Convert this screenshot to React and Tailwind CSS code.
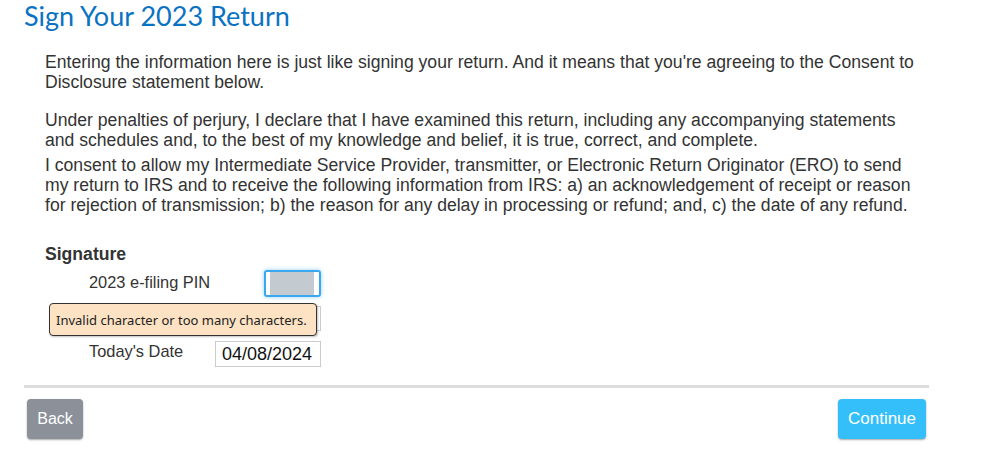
export default function App() {
  return (
    <div className="w-[999px] h-[452px] bg-white overflow-hidden font-['Liberation_Sans',Arial,sans-serif] text-[#333]">
      <div className="w-[905px] ml-[24px]">
        <h1 className="font-['Lato',sans-serif] text-[27px] leading-[32px] text-[#0a72c3]">
          Sign Your 2023 Return
        </h1>
        <div className="pl-[21px] pr-[10px] text-[17.6px] leading-[20px]">
          <p className="mt-[20px]">
            Entering the information here is just like signing your return. And it means that you're agreeing to the Consent to Disclosure statement below.
          </p>
          <p className="mt-[18px]">
            Under penalties of perjury, I declare that I have examined this return, including any accompanying statements and schedules and, to the best of my knowledge and belief, it is true, correct, and complete.
          </p>
          <p className="mt-[5px]">
            I consent to allow my Intermediate Service Provider, transmitter, or Electronic Return Originator (ERO) to send my return to IRS and to receive the following information from IRS: a) an acknowledgement of receipt or reason for rejection of transmission; b) the reason for any delay in processing or refund; and, c) the date of any refund.
          </p>

          <div className="mt-[29px] font-bold text-[#333]">Signature</div>
          <div className="w-[276px] text-[16.4px]">
            <div className="flex items-start justify-between h-[38px]">
              <span className="pl-[44px] mt-[8px] leading-[20px]">2023 e-filing PIN</span>
              <div className="w-[57px] h-[27px] mt-[6px] rounded-[3px] border-2 border-[#3aa7ee] shadow-[0_0_4px_#8fd0ff] bg-white flex items-center pl-[4px]">
                <div className="w-[44px] h-[23px] bg-[#c3cad0]" />
              </div>
            </div>
            <div className="relative flex justify-end items-start h-[36px]">
              <div className="w-[56px] h-[25px] mt-[4px] border border-[#ccc] bg-white" />
              <div className="absolute left-[4px] top-[1px] w-[268px] h-[33px] rounded-[4px] border border-[#333] bg-[#fde2c4] shadow-[1px_1px_2px_rgba(0,0,0,0.25)] flex items-center pl-[6px] font-['Noto_Sans',sans-serif] text-[13px] text-[#222]">
                Invalid character or too many characters.
              </div>
            </div>
            <div className="flex items-start justify-between">
              <span className="pl-[44px] mt-[3px] leading-[20px]">Today's Date</span>
              <div className="w-[106px] h-[26px] mt-[3px] border border-[#ccc] bg-white flex items-center pl-[6px] text-[18px] text-[#111]">
                04/08/2024
              </div>
            </div>
          </div>
        </div>
        <div className="mt-[18px] h-[3px] bg-[#ddd]" />
        <div className="flex justify-between items-start mt-[11px] pl-[3px] pr-[3px]">
          <button className="w-[56px] h-[40px] rounded-[4px] bg-[#8b9099] text-white text-[16px] shadow-[0_1px_2px_rgba(0,0,0,0.35)]">
            Back
          </button>
          <button className="w-[88px] h-[40px] rounded-[4px] bg-[#34bffb] text-white text-[17px] shadow-[0_1px_2px_rgba(0,0,0,0.35)]">
            Continue
          </button>
        </div>
      </div>
    </div>
  );
}
